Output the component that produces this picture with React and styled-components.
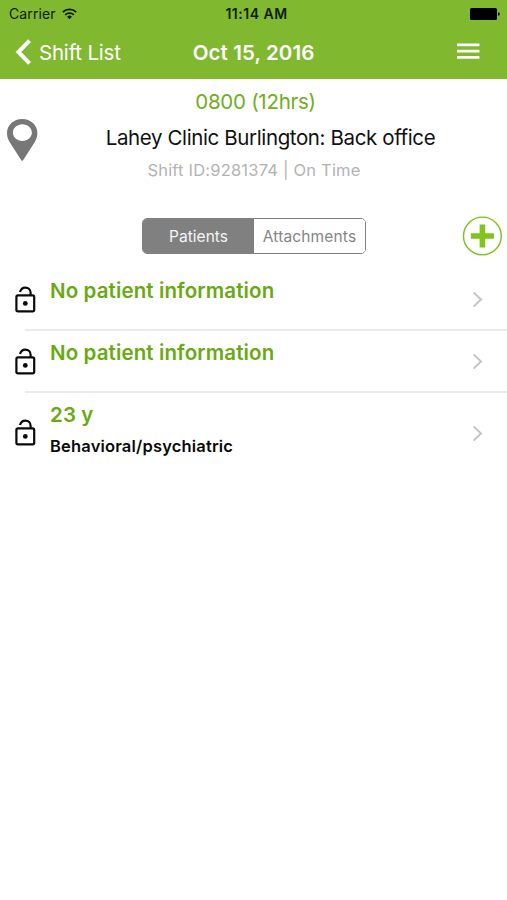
import React, { useState } from "react";
import styled, { createGlobalStyle } from "styled-components";

const patients = [
  { id: 1, title: "No patient information" },
  { id: 2, title: "No patient information" },
  { id: 3, title: "23 y", details: "Behavioral/psychiatric" }
];

export default function App() {
  const [tab, setTab] = useState("patients");
  return (
    <SPage>
      <GlobalStyle />
      <SHeader>
        <SStatusBar>
          <SCarrier>
            <SText size={14} spacing={0.12}>Carrier</SText>
            <WifiIcon />
          </SCarrier>
          <SClock>
            <SText size={14} weight={600} spacing={0.5}>11:14 AM</SText>
          </SClock>
          <SBattery>
            <BatteryIcon />
          </SBattery>
        </SStatusBar>
        <SNavBar>
          <SBackBtn>
            <BackIcon />
            <SText size={20.5} spacing={-0.2}>Shift List</SText>
          </SBackBtn>
          <SText size={20.5} weight={600} spacing={0.1}>Oct 15, 2016</SText>
          <SMenuBtn>
            <MenuIcon />
          </SMenuBtn>
        </SNavBar>
      </SHeader>
      <SShift>
        <SPin>
          <PinIcon />
        </SPin>
        <SShiftInfo>
          <SShiftTime>
            <SText size={20.5} spacing={-0.27}>0800 (12hrs)</SText>
          </SShiftTime>
          <SShiftPlace>
            <SText size={20.5} spacing={-0.38}>Lahey Clinic Burlington: Back office</SText>
          </SShiftPlace>
          <SShiftStatus>
            <SText size={16.5} spacing={0.2}>Shift ID:9281374 | On Time</SText>
          </SShiftStatus>
        </SShiftInfo>
      </SShift>
      <SToolbar>
        <STabs>
          <STab active={tab === "patients"} onClick={() => setTab("patients")}>
            <SText size={15.5} spacing={0.05}>Patients</SText>
          </STab>
          <STab active={tab === "attachments"} onClick={() => setTab("attachments")}>
            <SText size={15.5} spacing={0.15}>Attachments</SText>
          </STab>
        </STabs>
        <SAddBtn>
          <AddIcon />
        </SAddBtn>
      </SToolbar>
      <SList>
        {patients.map(patient => (
          <SRow key={patient.id}>
            <SLock>
              <LockIcon />
            </SLock>
            <SRowContent tall={!!patient.details}>
              <SRowText>
                <SRowTitle>
                  <SText size={20.5} weight={600} spacing={0.12}>{patient.title}</SText>
                </SRowTitle>
                {patient.details && (
                  <SRowDetails>
                    <SText size={16.5} weight={600} spacing={0.18}>{patient.details}</SText>
                  </SRowDetails>
                )}
              </SRowText>
              <ChevronIcon />
            </SRowContent>
          </SRow>
        ))}
      </SList>
    </SPage>
  );
}

const WifiIcon = () => (
  <svg width="15" height="12" viewBox="0 0 15 12">
    <path d="M0.8 4.1a9.6 9.6 0 0 1 13.4 0" fill="none" stroke="#0d1c00" strokeWidth="1.9" />
    <path d="M3.2 6.8a6.2 6.2 0 0 1 8.6 0" fill="none" stroke="#0d1c00" strokeWidth="1.8" />
    <path d="M5.1 8.8a3.4 3.4 0 0 1 4.8 0L7.5 11.3z" fill="#0d1c00" />
  </svg>
);

const BatteryIcon = () => (
  <svg width="30" height="12" viewBox="0 0 30 12">
    <rect width="27" height="12" rx="1.6" fill="#000" />
    <path d="M28 4.2c1.2 0.2 1.7 0.8 1.7 1.8s-0.5 1.6-1.7 1.8z" fill="#000" />
  </svg>
);

const BackIcon = () => (
  <svg width="16" height="26" viewBox="0 0 16 26">
    <path d="M14.6 1.6L3.4 13L14.6 24.4" fill="none" stroke="#fff" strokeWidth="4" />
  </svg>
);

const MenuIcon = () => (
  <svg width="23" height="17" viewBox="0 0 23 17">
    <path d="M0 1.8h22.4M0 8.1h22.4M0 14.3h22.4" fill="none" stroke="#fff" strokeWidth="2.8" />
  </svg>
);

const PinIcon = () => (
  <svg width="32" height="42" viewBox="0 0 32 42">
    <path
      fill="#777"
      fillRule="evenodd"
      d="M16.2 0C7.6 0 1 6.2 1 14.2c0 4 1.6 7.3 4.2 11.4L15.3 41.2q0.9 1.2 1.8 0L27.2 25.6c2.6-4.1 4.2-7.4 4.2-11.4C31.4 6.2 24.8 0 16.2 0zM16.4 5.2c5.3 0 9.5 3.7 9.5 8.4s-4.2 8.4-9.5 8.4-9.5-3.7-9.5-8.4 4.2-8.4 9.5-8.4z"
    />
  </svg>
);

const AddIcon = () => (
  <svg width="40" height="40" viewBox="0 0 40 40">
    <circle cx="20.4" cy="20" r="18.9" fill="none" stroke="#7dbf1d" strokeWidth="1.4" />
    <path d="M20.4 8.5v23M8.9 20h23" fill="none" stroke="#7fc31c" strokeWidth="5.6" />
  </svg>
);

const LockIcon = () => (
  <svg width="22" height="28" viewBox="0 0 22 28">
    <rect x="2.4" y="9.4" width="17.8" height="16" rx="1.6" fill="none" stroke="#0a0a0a" strokeWidth="2.2" />
    <path d="M6 6C6.8 3.2 8.8 1.6 11.3 1.6c3.1 0 5.3 2.2 5.3 5.2v2.4" fill="none" stroke="#0a0a0a" strokeWidth="2.2" />
    <circle cx="11.3" cy="17.4" r="2.4" fill="#0a0a0a" />
  </svg>
);

const ChevronIcon = () => (
  <svg width="11" height="17" viewBox="0 0 11 17">
    <path d="M1.6 1.4L9 8.5L1.6 15.6" fill="none" stroke="#c4c4c6" strokeWidth="2" />
  </svg>
);

const GlobalStyle = createGlobalStyle`
  * {
    box-sizing: border-box;
  }
  body {
    margin: 0;
    background: #fff;
    font-family: Inter, "Liberation Sans", sans-serif;
  }
  button {
    padding: 0;
    border: none;
    background: none;
    color: inherit;
    font-family: inherit;
    cursor: pointer;
  }
  svg {
    display: block;
    flex-shrink: 0;
  }
`;

const SPage = styled.div`
  width: 100%;
  min-height: 900px;
  background: #fff;
`;

const SText = styled.span.withConfig({
  shouldForwardProp: prop => !["size", "weight", "spacing"].includes(prop)
})`
  font-size: ${props => props.size}px;
  font-weight: ${props => props.weight || 400};
  letter-spacing: ${props => props.spacing}px;
  white-space: nowrap;
`;

const SHeader = styled.header`
  height: 79px;
  background: #80b830;
`;

const SStatusBar = styled.div`
  display: grid;
  grid-template-columns: 1fr auto 1fr;
  align-items: center;
  height: 27px;
  padding: 0 7px 0 9px;
  color: #0d1c00;
`;

const SCarrier = styled.div`
  display: flex;
  align-items: center;
  gap: 6px;
`;

const SClock = styled.div`
  display: flex;
  padding-left: 4px;
`;

const SBattery = styled.div`
  display: flex;
  justify-content: flex-end;
`;

const SNavBar = styled.div`
  display: grid;
  grid-template-columns: 1fr auto 1fr;
  align-items: center;
  height: 50px;
  padding: 0 15px;
  color: #fff;
`;

const SBackBtn = styled.button`
  display: flex;
  align-items: center;
  gap: 8px;
`;

const SMenuBtn = styled.button`
  display: flex;
  justify-self: end;
  margin: 0 12px 2px 0;
`;

const SShift = styled.section`
  display: flex;
  height: 125px;
`;

const SPin = styled.div`
  width: 42px;
  padding: 40px 0 0 6px;
`;

const SShiftInfo = styled.div`
  flex: 1;
  padding: 5px 8px 0 0;
  text-align: center;
`;

const SShiftTime = styled.div`
  padding-right: 30px;
  line-height: 36px;
  color: #71ad1c;
`;

const SShiftPlace = styled.div`
  line-height: 34px;
  color: #111;
`;

const SShiftStatus = styled.div`
  padding-right: 33px;
  line-height: 28px;
  color: #b3b3b3;
`;

const SToolbar = styled.div`
  display: grid;
  grid-template-columns: 1fr auto 1fr;
  align-items: center;
  height: 64px;
  padding: 0 5px 0 6px;
`;

const STabs = styled.div`
  display: grid;
  grid-column: 2;
  grid-template-columns: 1fr 1fr;
  width: 224px;
  height: 36px;
  border: 1px solid #808080;
  border-radius: 5px;
  overflow: hidden;
`;

const STab = styled.button.withConfig({
  shouldForwardProp: prop => prop !== "active"
})`
  background: ${props => (props.active ? "#808080" : "#fff")};
  color: ${props => (props.active ? "#f5f5f5" : "#858585")};
`;

const SAddBtn = styled.button`
  justify-self: end;
`;

const SList = styled.div`
  display: flex;
  flex-direction: column;
  padding-top: 1px;
`;

const SRow = styled.div`
  display: grid;
  grid-template-columns: 25px 1fr;
`;

const SLock = styled.div`
  display: flex;
  align-items: center;
  padding: 0 0 1px 14px;
`;

const SRowContent = styled.div.withConfig({
  shouldForwardProp: prop => prop !== "tall"
})`
  display: flex;
  align-items: center;
  justify-content: space-between;
  height: ${props => (props.tall ? 81 : 62)}px;
  padding: 0 24px 0 25px;
  border-bottom: ${props => (props.tall ? "none" : "2px solid #ebebeb")};
`;

const SRowText = styled.div`
  align-self: flex-start;
  padding-top: 6px;
`;

const SRowTitle = styled.div`
  line-height: 32px;
  color: #68aa12;
`;

const SRowDetails = styled.div`
  line-height: 28px;
  color: #0a0a0a;
`;
